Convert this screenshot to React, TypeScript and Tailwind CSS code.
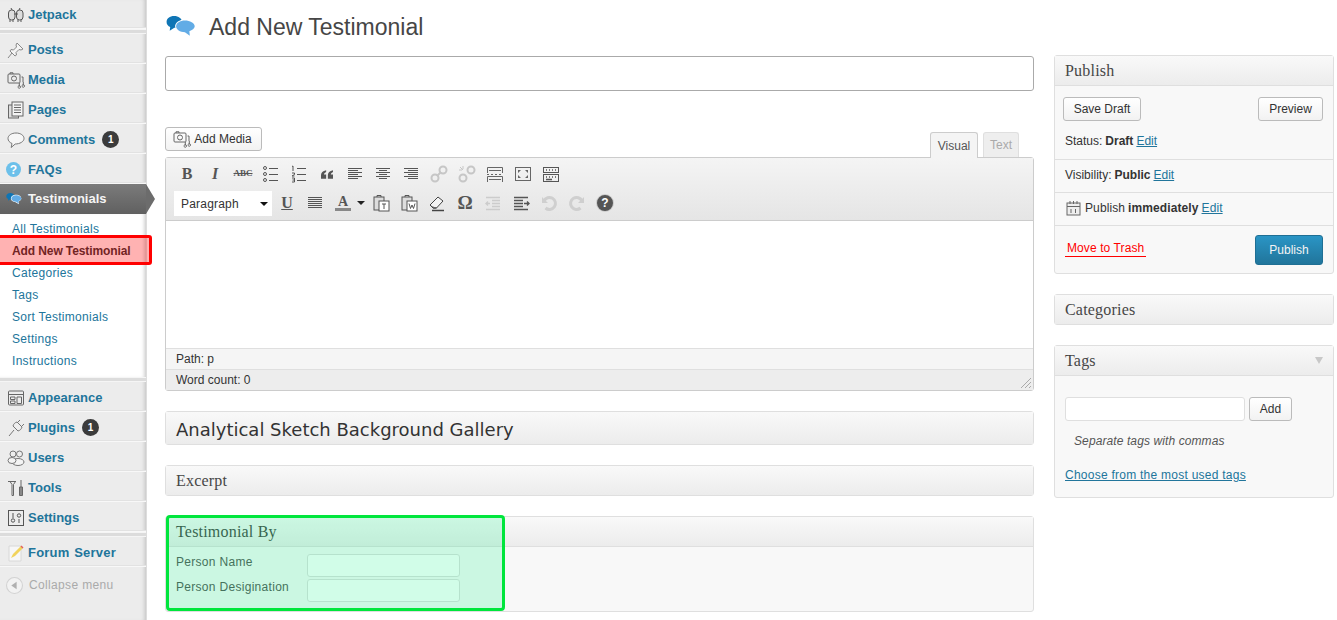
import React from 'react';

const Gray = ({ children, stroke = '#6f6f6f', size = 20 }: { children: React.ReactNode; stroke?: string; size?: number }) => (
  <svg width={size} height={size} viewBox="0 0 20 20" fill="none" stroke={stroke} strokeWidth={1} className="shrink-0">
    {children}
  </svg>
);

const Bubbles = ({ size = 30 }: { size?: number }) => (
  <svg width={size} height={size * 0.72} viewBox="0 0 30 22">
    <path d="M8 0C3.5 0 .3 2.5.3 6c0 2.4 1.5 4.3 3.7 5.3L3.5 15l4.7-3.1C12.5 12 16 9.500 16 6 16 2.500 12.500 0 8 0z" fill="#0f75b5" />
    <path d="M19 3.500c-5.500 0-10 3-10 7 0 3.800 4 6.800 9 7l6.500 4-.8-5.200c3-1.300 5.300-3.200 5.300-5.800 0-4-4.500-7-10-7z" fill="#fff" />
    <path d="M19 4.500c-5 0-9 2.700-9 6s4 6 9 6l5 3.500-.5-4.500c2.800-1 5.500-2.600 5.500-5 0-3.300-5-6-10-6z" fill="#62ace6" />
  </svg>
);

const JetpackIcon = () => (
  <Gray stroke="#555">
    <rect x="2.500" y="5" width="6.500" height="10" rx="3" fill="#ddd" />
    <rect x="10.500" y="5" width="6.500" height="10" rx="3" fill="#ddd" />
    <path d="M4 15v2M7 15v2M12 15v2M15 15v2M8 9h4M5 3l1 2M14 3l-1 2" />
  </Gray>
);
const PinIcon = () => (
  <Gray stroke="#888">
    <path d="M11 3l6 6-2 1-2-.500-3 3 .5 2.500-1.500 1-5-5 1-1.500 2.500.5 3-3-.500-2z" fill="#f4f4f4" />
    <path d="M6 13l-4 5" />
  </Gray>
);
const MediaIcon = () => (
  <Gray stroke="#666">
    <rect x="2" y="4" width="12" height="9" rx="1" />
    <circle cx="8" cy="8.500" r="2.500" />
    <path d="M4 4V2.800h3V4M15.500 7H17v5M12 17a1.300 1.300 0 1 0 0-.1M16 16a1.300 1.300 0 1 0 0-.1M13.300 16.500V13M17.300 15.500V12" />
  </Gray>
);
const PagesIcon = () => (
  <Gray stroke="#666">
    <rect x="2.500" y="5" width="10" height="13" fill="#ddd" />
    <rect x="6" y="2" width="11" height="14" fill="#f4f4f4" />
    <path d="M8 5h7M8 7.500h7M8 10h7M8 12.500h7" />
  </Gray>
);
const CommentIcon = () => (
  <Gray stroke="#777">
    <path d="M10 3c-4.500 0-8 2.300-8 5.500 0 2.200 1.600 4 4 5l-.8 4 4-3.500c4.500 0 8.800-2.300 8.800-5.500S14.500 3 10 3z" fill="#f6f6f6" />
  </Gray>
);
const AppearanceIcon = () => (
  <Gray stroke="#666">
    <rect x="2.500" y="3" width="15" height="14" rx="1" />
    <path d="M2.500 6.500h15M4.500 9h4.500v2.500H4.500zM4.500 13h4.500v2.500H4.500zM11 9h4.500v6.500H11z" />
  </Gray>
);
const PluginIcon = () => (
  <Gray stroke="#777">
    <path d="M7 8l5 5c2-.500 3.500-2 4-4l-5-5c-2 .500-3.500 2-4 4z" fill="#eee" />
    <path d="M11 5l3-3M15 9l3-3M8 12l-5 6" />
  </Gray>
);
const UsersIcon = () => (
  <Gray stroke="#777">
    <circle cx="7" cy="6" r="3" fill="#eee" />
    <circle cx="13.500" cy="6" r="3" fill="#eee" />
    <ellipse cx="12" cy="14" rx="6" ry="3.500" fill="#f4f4f4" />
    <ellipse cx="6" cy="12.500" rx="4" ry="3" fill="#f4f4f4" />
  </Gray>
);
const ToolsIcon = () => (
  <Gray stroke="#666">
    <path d="M2 3.500h8M4 3.500l2 3v11h1.500v-11l2-3" />
    <path d="M15 2v7M13.500 9h3v8.500h-3z" fill="#888" />
  </Gray>
);
const SettingsIcon = () => (
  <Gray stroke="#555">
    <rect x="2.500" y="2.500" width="15" height="15" />
    <path d="M7 5v5M13 11v4" />
    <circle cx="7" cy="12.500" r="1.700" />
    <circle cx="13" cy="7.500" r="1.700" />
  </Gray>
);
const ForumIcon = () => (
  <svg width={20} height={20} viewBox="0 0 20 20" className="shrink-0">
    <path d="M3 3h12v15H3z" fill="#f7f7f7" stroke="#d8d8d8" />
    <path d="M5 15l2-4 8-8 2 2-8 8z" fill="#f1d35c" />
    <path d="M15 3l2 2" stroke="#e26060" strokeWidth="1.500" />
  </svg>
);
const CollapseIcon = () => (
  <svg width={17} height={17} viewBox="0 0 16 16" className="shrink-0">
    <circle cx="8" cy="8" r="7.500" fill="#f2f2f2" stroke="#d2d2d2" />
    <path d="M10 4.500v7L5 8z" fill="#b0b0b0" />
  </svg>
);
const FaqIcon = () => (
  <span className="flex h-[15px] w-[15px] items-center justify-center rounded-full bg-[#6cc0ea] text-[12px] font-bold text-white">?</span>
);

const MenuItem = ({ icon, label, badge, spaced }: { icon: React.ReactNode; label: string; badge?: boolean; spaced?: boolean }) => (
  <div className="flex h-[30px] items-center border-b border-[#f8f8f8] pl-[6px] pt-[2px] shadow-[0_-1px_0_#e2e2e2_inset]">
    <span className="flex w-[22px] shrink-0 items-center justify-start">{icon}</span>
    <span className={`text-[13px] font-bold text-[#21759b] ${spaced ? '[word-spacing:1px] tracking-[0.2px]' : ''}`}>{label}</span>
    {badge && (
      <span className="ml-[7px] flex h-[17px] w-[17px] items-center justify-center rounded-full bg-[#3b3b3b] text-[10px] font-bold text-white">1</span>
    )}
  </div>
);

const Separator = () => <div className="h-[5px] border-y border-[#f5f5f5] bg-[#dcdcdc]" />;

const Sidebar = () => (
  <aside className="h-[620px] w-[146px] shrink-0 bg-[#ececec] font-['Liberation_Sans',sans-serif] shadow-[inset_-4px_0_4px_-3px_#bdbdbd,1px_0_0_#dddddd]">
    <div className="-mt-px">
      <MenuItem icon={<JetpackIcon />} label="Jetpack" />
    </div>
    <Separator />
    <MenuItem icon={<PinIcon />} label="Posts" />
    <MenuItem icon={<MediaIcon />} label="Media" />
    <MenuItem icon={<PagesIcon />} label="Pages" />
    <MenuItem icon={<CommentIcon />} label="Comments" badge />
    <MenuItem icon={<FaqIcon />} label="FAQs" />
    <div className="relative flex h-[30px] w-[146px] items-center bg-gradient-to-b from-[#7b7b7b] to-[#606060] pl-[6px]">
      <span className="flex w-[22px] shrink-0"><Bubbles size={16} /></span>
      <span className="text-[13px] font-bold text-[#f5f5f5]">Testimonials</span>
      <span className="absolute left-full top-0 h-0 w-0 border-y-[15px] border-l-[9px] border-y-transparent border-l-[#6c6c6c]" />
    </div>
    <div className="flex h-[163px] flex-col bg-white pl-[12px] pt-[4px] text-[12px] leading-[22px] tracking-[0.3px] text-[#21759b] shadow-[inset_-4px_0_4px_-3px_#bdbdbd]">
      <span>All Testimonials</span>
      <span className="font-bold tracking-[-0.1px] text-[#333333]">Add New Testimonial</span>
      <span>Categories</span>
      <span>Tags</span>
      <span>Sort Testimonials</span>
      <span>Settings</span>
      <span>Instructions</span>
    </div>
    <Separator />
    <MenuItem icon={<AppearanceIcon />} label="Appearance" />
    <MenuItem icon={<PluginIcon />} label="Plugins" badge />
    <MenuItem icon={<UsersIcon />} label="Users" />
    <MenuItem icon={<ToolsIcon />} label="Tools" />
    <MenuItem icon={<SettingsIcon />} label="Settings" />
    <Separator />
    <MenuItem icon={<ForumIcon />} label="Forum Server" spaced />
    <div className="flex h-[36px] items-center gap-[6px] pl-[6px] text-[12px] tracking-[0.35px] text-[#aaaaaa]">
      <CollapseIcon />
      <span>Collapse menu</span>
    </div>
  </aside>
);

const tb = '#555';
const lines = (rows: [number, number][], stroke = tb) => (
  <Gray stroke={stroke}>
    <path d={rows.map(([x, y], i) => `M${x} ${4.5 + i * 2}H${y}`).join('')} />
  </Gray>
);
const all = (w1: number, w2: number) => [0, 1, 2, 3, 4, 5].map((i) => (i % 2 ? [w1, w2] : [3, 17])) as [number, number][];

const TextBtn = ({ children, className }: { children: React.ReactNode; className: string }) => (
  <span className={`flex h-[24px] w-[28px] items-center justify-center ${className}`}>{children}</span>
);
const Btn = ({ children }: { children: React.ReactNode }) => (
  <span className="flex h-[24px] w-[28px] items-center justify-center">{children}</span>
);
const LinkIcon = ({ broken }: { broken?: boolean }) => (
  <Gray stroke="#c6c6c6">
    <circle cx="6" cy="14" r="3.500" strokeWidth="2" />
    <circle cx="14" cy="6" r="3.500" strokeWidth="2" />
    {broken ? <path d="M3 3l3 3M6 2v3M2 6h3" /> : <path d="M8 12l4-4" strokeWidth="2" />}
  </Gray>
);

const ToolbarTop = () => (
  <div className="flex h-[32px] items-center pl-[7px]">
    <TextBtn className="font-['Liberation_Serif',serif] text-[16px] font-bold text-[#555555]">B</TextBtn>
    <TextBtn className="font-['Liberation_Serif',serif] text-[16px] font-bold italic text-[#555555]">I</TextBtn>
    <TextBtn className="font-['Liberation_Serif',serif] text-[9px] font-bold text-[#555555] line-through">ABC</TextBtn>
    <Btn>
      <Gray stroke={tb}>
        <circle cx="4" cy="4" r="1.500" /><circle cx="4" cy="10" r="1.500" /><circle cx="4" cy="16" r="1.500" />
        <path d="M8 4.500h9M8 10.500h9M8 16.500h9" />
      </Gray>
    </Btn>
    <Btn>
      <Gray stroke={tb}>
        <path d="M3 2.500l1-.5v5M3 9h2.500v1.500L3 12h2.500M3 14h2.500v2H3.500M5.500 16v2H3M8 4.500h9M8 10.500h9M8 16.500h9" />
      </Gray>
    </Btn>
    <Btn>
      <svg width={12} height={9} viewBox="0 0 14 10" fill="#555">
        <path d="M6 0v2C4 3 3.500 4 3.500 5H6v5H0V5.500C0 3 2 .800 6 0zM14 0v2c-2 1-2.500 2-2.500 3H14v5H8V5.500C8 3 10 .800 14 0z" />
      </svg>
    </Btn>
    <Btn>{lines(all(3, 13))}</Btn>
    <Btn>{lines(all(6, 14))}</Btn>
    <Btn>{lines(all(7, 17))}</Btn>
    <Btn><LinkIcon /></Btn>
    <Btn><LinkIcon broken /></Btn>
    <Btn>
      <Gray stroke="#666">
        <path d="M2.500 9V3.500h15V9M2 10.500h2M6 10.500h2M10 10.500h2M14 10.500h2M2.500 18v-5.500h15V18M4 6.500h12M4 15.500h12" />
      </Gray>
    </Btn>
    <Btn>
      <Gray stroke="#666">
        <rect x="2.500" y="3.500" width="15" height="13" />
        <path d="M5 6h3L5 9zM15 6h-3l3 3zM5 14h3l-3-3zM15 14h-3l3-3z" fill="#666" stroke="none" />
      </Gray>
    </Btn>
    <Btn>
      <Gray stroke="#555">
        <rect x="2.500" y="3.500" width="15" height="5" />
        <rect x="2.500" y="10.500" width="15" height="7" />
        <path d="M5 6h1M8 6h1M11 6h1M14 6h1M5 13h1M8 13h1M11 13h1M14 13h1M5 15.500h6" strokeWidth="1.500" />
      </Gray>
    </Btn>
  </div>
);

const ToolbarBottom = () => (
  <div className="flex h-[28px] items-start pl-[8px] pt-[1px]">
    <div className="mr-[1px] flex h-[25px] w-[98px] items-center justify-between bg-white pl-[7px] pr-[4px] text-[12px] tracking-[0.2px] text-[#333333]">
      Paragraph
      <span className="h-0 w-0 border-x-[4px] border-t-[4px] border-x-transparent border-t-[#111111]" />
    </div>
    <TextBtn className="font-['Liberation_Serif',serif] text-[16px] font-bold text-[#555555] underline">U</TextBtn>
    <Btn>{lines([[3, 17], [3, 17], [3, 17], [3, 17], [3, 17], [3, 17]])}</Btn>
    <span className="flex h-[24px] w-[38px] items-center pl-[6px]">
      <span className="flex flex-col items-center font-['Liberation_Serif',serif] text-[14px] font-bold leading-[13px] text-[#555555]">
        A
        <span className="h-[3px] w-[16px] bg-[#888888]" />
      </span>
      <span className="ml-[6px] h-0 w-0 border-x-[4px] border-t-[4px] border-x-transparent border-t-[#222222]" />
    </span>
    <Btn>
      <Gray stroke="#555">
        <rect x="3" y="4" width="10" height="13" fill="#ddd" />
        <rect x="8" y="8" width="10" height="10" fill="#fff" />
        <path d="M6 4V2.500h4V4M11 11h4M13 11v5" />
      </Gray>
    </Btn>
    <Btn>
      <Gray stroke="#555">
        <rect x="3" y="4" width="10" height="13" fill="#ddd" />
        <rect x="8" y="8" width="10" height="10" fill="#fff" />
        <path d="M6 4V2.500h4V4M10 10.500l1.500 5 1.500-3.500 1.500 3.500 1.500-5" />
      </Gray>
    </Btn>
    <Btn>
      <Gray stroke="#444">
        <path d="M3 12l8-8 5 4-6.500 7H6z" fill="#f4f4f4" />
        <path d="M3 12l3 3h3.500" fill="#888" />
        <path d="M5 17.500h12" strokeWidth="1.500" />
      </Gray>
    </Btn>
    <TextBtn className="font-['Liberation_Serif',serif] text-[19px] font-bold text-[#555555]">Ω</TextBtn>
    <Btn>
      <Gray stroke="#cccccc">
        <path d="M3 4.500h14M9 7.500h8M9 10.500h8M9 13.500h8M3 16.500h14M7 10.500H3M5 8.500l-2 2 2 2" strokeWidth="1.400" />
      </Gray>
    </Btn>
    <Btn>
      <Gray stroke="#555">
        <path d="M3 4.500h14M3 7.500h9M3 10.500h9M3 13.500h9M3 16.500h14M13 10.500h5M16 8.500l2 2-2 2" strokeWidth="1.400" />
      </Gray>
    </Btn>
    <Btn>
      <Gray stroke="#cfcfcf">
        <path d="M5 8a6 6 0 1 1 1.500 7" strokeWidth="3" />
        <path d="M3 4v6h6z" fill="#cfcfcf" stroke="none" />
      </Gray>
    </Btn>
    <Btn>
      <Gray stroke="#cfcfcf">
        <path d="M15 8a6 6 0 1 0-1.500 7" strokeWidth="3" />
        <path d="M17 4v6h-6z" fill="#cfcfcf" stroke="none" />
      </Gray>
    </Btn>
    <Btn>
      <span className="flex h-[16px] w-[16px] items-center justify-center rounded-full border-2 border-[#555555] bg-[#555555] text-[12px] font-bold text-white shadow-[0_0_0_1px_#cccccc]">?</span>
    </Btn>
  </div>
);

const Editor = () => (
  <div className="rounded-[3px] border border-[#cccccc] bg-white">
    <div className="h-[63px] border-b border-[#cccccc] bg-gradient-to-b from-[#f4f4f4] to-[#e5e5e5]">
      <ToolbarTop />
      <ToolbarBottom />
    </div>
    <div className="h-[127px]" />
    <div className="flex h-[21px] items-center border-t border-[#dfdfdf] bg-[#f5f5f5] pl-[10px] text-[12px] text-[#333333]">Path: p</div>
    <div className="relative flex h-[21px] items-center border-t border-[#dfdfdf] bg-[#ededed] pl-[10px] text-[12px] text-[#333333]">
      Word count: 0
      <svg width={12} height={12} viewBox="0 0 12 12" stroke="#aaa" className="absolute bottom-[1px] right-[1px]">
        <path d="M11 1L1 11M11 5l-6 6M11 9l-2 2" />
      </svg>
    </div>
  </div>
);

const PostBox = ({ title, titleClass, children, bar = 'h-[30px]' }: { title: string; titleClass?: string; children?: React.ReactNode; bar?: string }) => (
  <div className="rounded-[3px] border border-[#dfdfdf] bg-[#f8f8f8]">
    <div className={`flex items-center bg-gradient-to-b from-[#f9f9f9] to-[#ececec] pl-[10px] ${bar} ${children ? 'border-b border-[#dfdfdf]' : ''} ${titleClass ?? "font-['Liberation_Serif',serif] text-[16px] tracking-[0.2px] text-[#464646]"}`}>
      {title}
    </div>
    {children}
  </div>
);

const WpButton = ({ children, className }: { children: React.ReactNode; className?: string }) => (
  <span className={`flex h-[24px] items-center justify-center rounded-[3px] border border-[#bbbbbb] bg-gradient-to-b from-white to-[#f2f2f2] text-[12px] text-[#333333] ${className ?? ''}`}>{children}</span>
);

const Edit = () => <span className="text-[#21759b] underline">Edit</span>;

const PublishBox = () => (
  <PostBox title="Publish" bar="h-[30px]">
    <div className="text-[12px] text-[#333333]">
      <div className="flex justify-between pl-[8px] pr-[10px] pt-[11px]">
        <WpButton className="w-[78px]">Save Draft</WpButton>
        <WpButton className="w-[65px]">Preview</WpButton>
      </div>
      <div className="flex h-[39px] items-center gap-[3px] border-b border-[#dfdfdf] pl-[10px] pt-[2px]">
        Status: <b>Draft</b> <Edit />
      </div>
      <div className="flex h-[33px] items-center gap-[3px] border-b border-[#dfdfdf] pb-[2px] pl-[10px]">
        Visibility: <b>Public</b> <Edit />
      </div>
      <div className="flex h-[33px] items-center gap-[3px] border-b border-[#dfdfdf] pb-[2px] pl-[11px] tracking-[0.1px]">
        <svg width={15} height={16} viewBox="0 0 15 16" fill="none" stroke="#666" className="mr-[1px]">
          <rect x="1" y="3" width="13" height="12" fill="#eee" />
          <path d="M1 6.500h13M4 1v3M7.500 1v3M11 1v3M5 9v4M9.500 9v4" />
        </svg>
        Publish <b>immediately</b> <Edit />
      </div>
      <div className="flex h-[47px] items-center justify-between pl-[10px] pr-[10px]">
        <span className="mb-[1px] border-b border-[#ff0000] px-[2px] leading-[15px] tracking-[0.1px] text-[#ff0000]">Move to Trash</span>
        <span className="flex h-[30px] w-[68px] items-center justify-center rounded-[3px] border border-[#1f6f94] bg-gradient-to-b from-[#2a95c5] to-[#21759b] text-[#f4f4f4]">Publish</span>
      </div>
    </div>
  </PostBox>
);

const TagsBox = () => (
  <div className="rounded-[3px] border border-[#dfdfdf] bg-[#f8f8f8]">
    <div className="flex h-[30px] items-center justify-between border-b border-[#dfdfdf] bg-gradient-to-b from-[#f9f9f9] to-[#ececec] pl-[10px] pr-[10px] font-['Liberation_Serif',serif] text-[16px] tracking-[0.2px] text-[#464646]">
      Tags
      <span className="h-0 w-0 border-x-[4px] border-t-[7px] border-x-transparent border-t-[#c8c8c8]" />
    </div>
    <div className="px-[10px] pb-[13px] pt-[21px] text-[12px]">
      <div className="flex items-center gap-[4px]">
        <span className="h-[24px] w-[180px] rounded-[3px] border border-[#dfdfdf] bg-white" />
        <WpButton className="w-[43px]">Add</WpButton>
      </div>
      <p className="pl-[9px] pt-[11px] italic tracking-[0.1px] text-[#555555]">Separate tags with commas</p>
      <p className="pt-[16px] tracking-[0.25px] text-[#21759b] underline">Choose from the most used tags</p>
    </div>
  </div>
);

const App = () => (
  <div className="relative flex h-[620px] w-[1337px] overflow-hidden bg-white font-['Liberation_Sans',sans-serif]">
    <Sidebar />
    <main className="ml-[19px] w-[869px] shrink-0">
      <div className="flex h-[56px] items-start pl-[1px] pt-[16px]">
        <Bubbles size={30} />
        <h1 className="ml-[13px] text-[23px] leading-[23px] text-[#464646]">Add New Testimonial</h1>
      </div>
      <div className="h-[35px] rounded-[3px] border border-[#aaaaaa] bg-white" />
      <div className="mt-[36px] flex h-[30px] items-start justify-between">
        <WpButton className="w-[97px] gap-[2px] pr-[3px]">
          <MediaIcon />
          Add Media
        </WpButton>
        <div className="mr-[15px] mt-[5px] flex gap-[5px] text-[12px]">
          <span className="z-10 flex h-[26px] w-[48px] items-center justify-center rounded-t-[3px] border border-b-0 border-[#cccccc] bg-[#f4f4f4] text-[#555555]">Visual</span>
          <span className="flex h-[25px] w-[36px] items-center justify-center rounded-t-[3px] border border-b-0 border-[#dfdfdf] bg-[#eeeeee] text-[#aaaaaa]">Text</span>
        </div>
      </div>
      <Editor />
      <div className="mt-[20px]">
        <PostBox title="Analytical Sketch Background Gallery" bar="h-[32px] pt-[2px]" titleClass="font-['DejaVu_Sans',sans-serif] text-[18px] text-[#333333]" />
      </div>
      <div className="mt-[20px]">
        <PostBox title="Excerpt" bar="h-[29px]" />
      </div>
      <div className="mt-[20px]">
        <PostBox title="Testimonial By">
          <div className="h-[64px] pl-[10px] text-[12px] tracking-[0.3px] text-[#555555]">
            <div className="flex h-[25px] items-start pt-[7px]">
              <span className="mt-[1px] w-[131px] leading-[15px]">Person Name</span>
              <span className="h-[23px] w-[153px] rounded-[3px] border border-[#dfdfdf] bg-white" />
            </div>
            <div className="flex h-[25px] items-start pt-[7px]">
              <span className="mt-[1px] w-[131px] leading-[15px]">Person Desigination</span>
              <span className="h-[23px] w-[153px] rounded-[3px] border border-[#dfdfdf] bg-white" />
            </div>
          </div>
        </PostBox>
      </div>
    </main>
    <div className="ml-[20px] flex w-[280px] shrink-0 flex-col gap-[20px] pt-[55px]">
      <PublishBox />
      <PostBox title="Categories" bar="h-[29px]" />
      <TagsBox />
    </div>
    {/* annotation boxes on top of the screenshot */}
    <div className="absolute left-[-6px] top-[235px] h-[30px] w-[158px] rounded-[3px] border-[3px] border-[#ff0000] bg-[#ff0000]/30" />
    <div className="absolute left-[166px] top-[515px] h-[96px] w-[339px] rounded-[4px] border-[3px] border-[#00e63c] bg-[#00f580]/[0.18]" />
  </div>
);

export default App;
